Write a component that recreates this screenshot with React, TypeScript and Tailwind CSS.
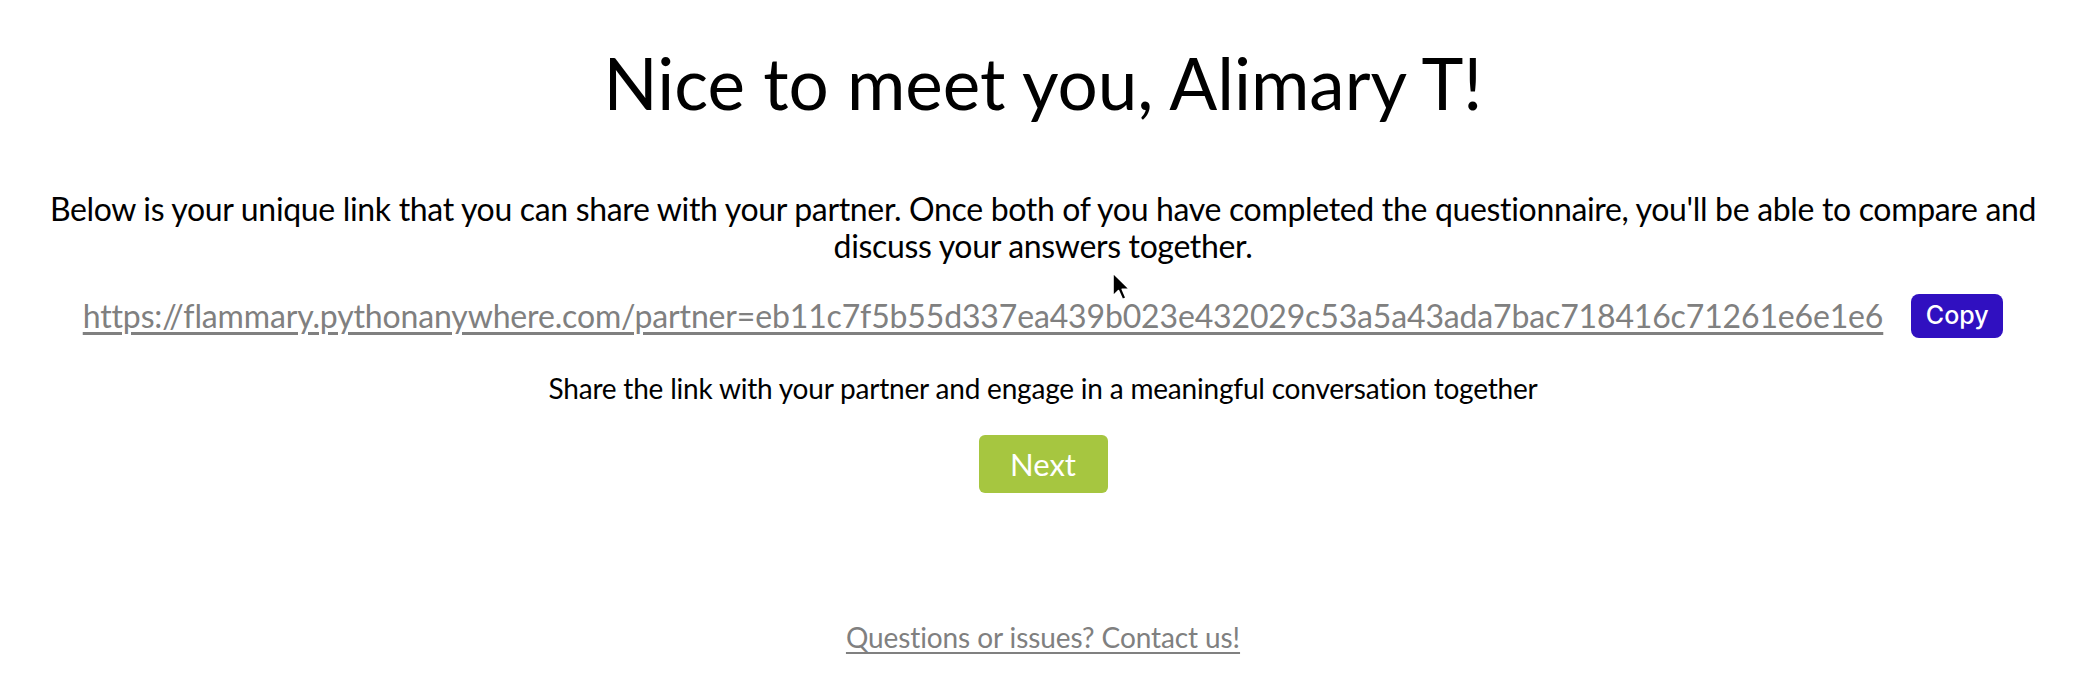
import { useState } from "react";

const partnerLink =
  "https://flammary.pythonanywhere.com/partner=eb11c7f5b55d337ea439b023e432029c53a5a43ada7bac718416c71261e6e1e6";

const Cursor = () => (
  <svg
    className="absolute left-[1110px] top-[270px]"
    width="24"
    height="34"
    viewBox="0 0 24 34"
  >
    <path
      d="M3 3 L3 26 L8.5 20.5 L12.5 29.5 L16 28 L12.2 19.2 L19.5 19.2 Z"
      fill="#000"
      stroke="#fff"
      strokeWidth="1.6"
      strokeLinejoin="round"
    />
  </svg>
);

export default function App() {
  const [copied, setCopied] = useState(false);

  return (
    <div className="relative min-h-[692px] w-full bg-white font-['Lato','Noto_Sans',sans-serif] text-black">
      <div className="flex flex-col items-center px-[30px] pt-[47px] text-center">
        <h1 className="text-[71px] leading-[72px] font-normal">
          Nice to meet you, Alimary T!
        </h1>

        <p className="mt-[71px] text-[32px] leading-[37px] tracking-[-0.33px]">
          Below is your unique link that you can share with your partner. Once
          both of you have completed the questionnaire, you'll be able to
          compare and discuss your answers together.
        </p>

        <div className="mt-[30px] flex items-center gap-[28px]">
          <a
            href="#"
            className="text-[32px] leading-[36px] tracking-[-0.15px] text-[#808080] underline underline-offset-[4px]"
          >
            {partnerLink}
          </a>
          <button
            onClick={() => setCopied(true)}
            className="h-[44px] w-[92px] rounded-[8px] bg-[#3010c0] font-['Inter',sans-serif] text-[25px] font-medium text-white"
          >
            {copied ? "Copied" : "Copy"}
          </button>
        </div>

        <p className="mt-[32px] text-[28px] leading-[36px] tracking-[-0.2px]">
          Share the link with your partner and engage in a meaningful
          conversation together
        </p>

        <button className="mt-[29px] h-[58px] w-[129px] rounded-[6px] bg-[#a6c640] text-[31px] text-white">
          Next
        </button>

        <a
          href="#"
          className="mt-[126px] text-[28px] leading-[36px] tracking-[-0.1px] text-[#808080] underline underline-offset-[4px]"
        >
          Questions or issues? Contact us!
        </a>
      </div>
      <Cursor />
    </div>
  );
}
